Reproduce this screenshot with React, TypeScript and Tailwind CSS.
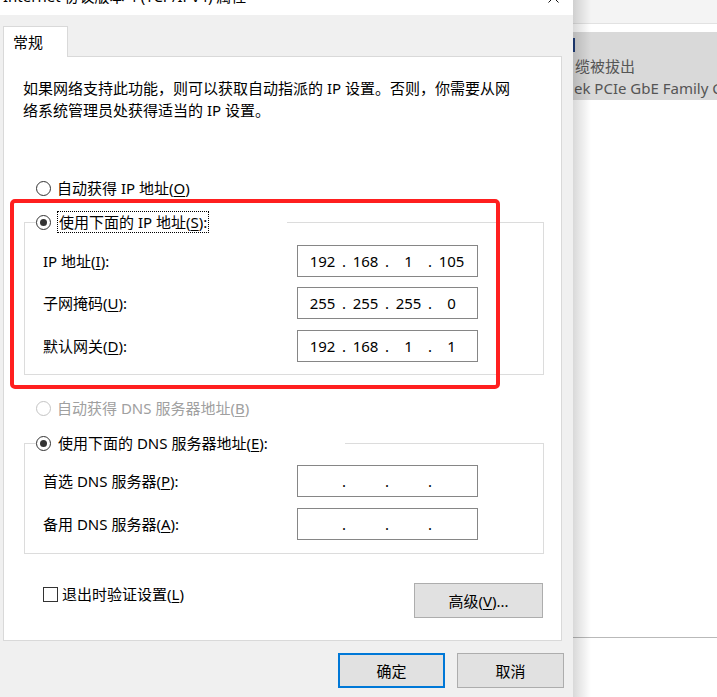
import React from "react";

type IpProps = { parts: string[] };

function Radio({ checked, disabled }: { checked?: boolean; disabled?: boolean }) {
  return (
    <span
      className={`flex h-[15px] w-[15px] shrink-0 items-center justify-center rounded-full border bg-white ${
        disabled ? "border-[#c4c4c4]" : "border-[#333333]"
      }`}
    >
      {checked && <span className="h-[7px] w-[7px] rounded-full bg-[#333333]" />}
    </span>
  );
}

function IpBox({ parts }: IpProps) {
  return (
    <div className="flex h-[32px] w-[181px] items-center border border-[#868686] bg-white pl-[8px]">
      {parts.map((p, i) => (
        <React.Fragment key={i}>
          <span className="w-[33px] text-center">{p}</span>
          {i < 3 && <span className="w-[10px] text-center">.</span>}
        </React.Fragment>
      ))}
    </div>
  );
}

function Key({ k }: { k: string }) {
  return <u className="underline underline-offset-[2px]">{k}</u>;
}

function Row({ label, parts, className }: { label: React.ReactNode; parts: string[]; className?: string }) {
  return (
    <div className={`flex h-[32px] items-center ${className ?? ""}`}>
      <span className="ml-[7px] w-[254px]">{label}</span>
      <IpBox parts={parts} />
    </div>
  );
}

function Button({ children, primary, className }: { children: React.ReactNode; primary?: boolean; className?: string }) {
  return (
    <div
      className={`flex h-[35px] items-center justify-center bg-[#e1e1e1] ${
        primary ? "border-2 border-[#0078d7]" : "border border-[#adadad]"
      } ${className ?? ""}`}
    >
      {children}
    </div>
  );
}

export default function App() {
  const empty = ["", "", "", ""];

  return (
    <div className="relative flex h-[697px] w-[717px] overflow-hidden bg-white font-['Noto_Sans','Noto_Sans_CJK_SC',sans-serif] text-[15px] leading-[22px] text-black">
      {/* dialog */}
      <div className="flex w-[573px] shrink-0 flex-col bg-[#f0f0f0]">
        <div className="flex h-[15px] items-start justify-between overflow-hidden bg-white">
          <div className="-mt-[14px] pl-[3px] leading-[20px] whitespace-nowrap">Internet 协议版本 4 (TCP/IPv4) 属性</div>
          <svg className="-mt-[8px] mr-[14px]" width="11" height="11" viewBox="0 0 11 11">
            <path d="M0.5 0.5 L10.5 10.5 M10.5 0.5 L0.5 10.5" stroke="#111" strokeWidth="1" />
          </svg>
        </div>

        <div className="pl-[3px] pt-[11px]">
          <div className="relative z-10 -mb-px h-[31px] w-[65px] border-x border-t border-[#d9d9d9] bg-white pl-[9px] pt-[4px]">
            常规
          </div>
        </div>

        <div className="ml-[3px] flex h-[585px] w-[559px] flex-col border border-[#d9d9d9] bg-white pl-[19px] pt-[20px]">
          <p className="whitespace-nowrap">
            如果网络支持此功能，则可以获取自动指派的 IP 设置。否则，你需要从网
            <br />
            络系统管理员处获得适当的 IP 设置。
          </p>

          <div className="ml-[13px] mt-[56px] flex h-[22px] items-center">
            <Radio />
            <span className="ml-[6px]">
              自动获得 IP 地址(<Key k="O" />)
            </span>
          </div>

          <fieldset className="ml-[1px] mt-[12px] w-[520px] border border-[#dcdcdc] px-[11px] pb-[12px]">
            <legend className="flex h-[22px] w-[251px] items-center">
              <Radio checked />
              <span className="ml-[6px] border border-dotted border-black px-[1px] leading-[20px]">
                使用下面的 IP 地址(<Key k="S" />):
              </span>
            </legend>
            <Row className="mt-[12px]" label={<>IP 地址(<Key k="I" />):</>} parts={["192", "168", "1", "105"]} />
            <Row className="mt-[10px]" label={<>子网掩码(<Key k="U" />):</>} parts={["255", "255", "255", "0"]} />
            <Row className="mt-[11px]" label={<>默认网关(<Key k="D" />):</>} parts={["192", "168", "1", "1"]} />
          </fieldset>

          <div className="ml-[13px] mt-[22px] flex h-[22px] items-center text-[#a0a0a0]">
            <Radio disabled />
            <span className="ml-[6px]">
              自动获得 DNS 服务器地址(<Key k="B" />)
            </span>
          </div>

          <fieldset className="ml-[1px] mt-[13px] w-[520px] border border-[#dcdcdc] px-[11px] pb-[13px]">
            <legend className="flex h-[22px] w-[309px] items-center">
              <Radio checked />
              <span className="ml-[7px]">
                使用下面的 DNS 服务器地址(<Key k="E" />):
              </span>
            </legend>
            <Row className="mt-[11px]" label={<>首选 DNS 服务器(<Key k="P" />):</>} parts={empty} />
            <Row className="mt-[11px]" label={<>备用 DNS 服务器(<Key k="A" />):</>} parts={empty} />
          </fieldset>

          <div className="ml-[1px] mt-[29px] flex w-[519px] items-start justify-between">
            <div className="ml-[19px] flex h-[22px] items-center">
              <span className="h-[15px] w-[15px] border border-[#333333] bg-white" />
              <span className="ml-[4px]">
                退出时验证设置(<Key k="L" />)
              </span>
            </div>
            <Button className="w-[129px]">
              高级(<Key k="V" />)...
            </Button>
          </div>
        </div>

        <div className="mt-[12px] flex justify-end gap-[12px] pr-[9px]">
          <Button primary className="w-[107px]">
            确定
          </Button>
          <Button className="w-[107px]">取消</Button>
        </div>
      </div>

      {/* window behind */}
      <div className="relative flex flex-1 flex-col overflow-hidden bg-white text-[#555555]">
        <div className="h-[24px] border-b border-[#e2e2e2] bg-[#f4f4f4]" />
        <div className="h-[8px]" />
        <div className="flex h-[68px] flex-col bg-[#d9d9d9] whitespace-nowrap">
          <div className="mt-[6px] h-[14px] w-[2px] bg-[#1f3d7a]" />
          <div className="mt-[3px] pl-[2px]">缆被拔出</div>
          <div className="pl-[1px]">ek PCIe GbE Family Controller</div>
        </div>
        <div className="h-[537px]" />
        <div className="h-px bg-[#b9b9b9]" />
        <div className="pointer-events-none absolute inset-y-0 left-0 w-[18px] bg-linear-to-r from-black/15 to-transparent" />
      </div>

      {/* red annotation */}
      <div className="pointer-events-none absolute left-[10px] top-[199px] h-[190px] w-[490px] rounded-[5px] border-[4px] border-[#ff1f1f]" />
    </div>
  );
}
